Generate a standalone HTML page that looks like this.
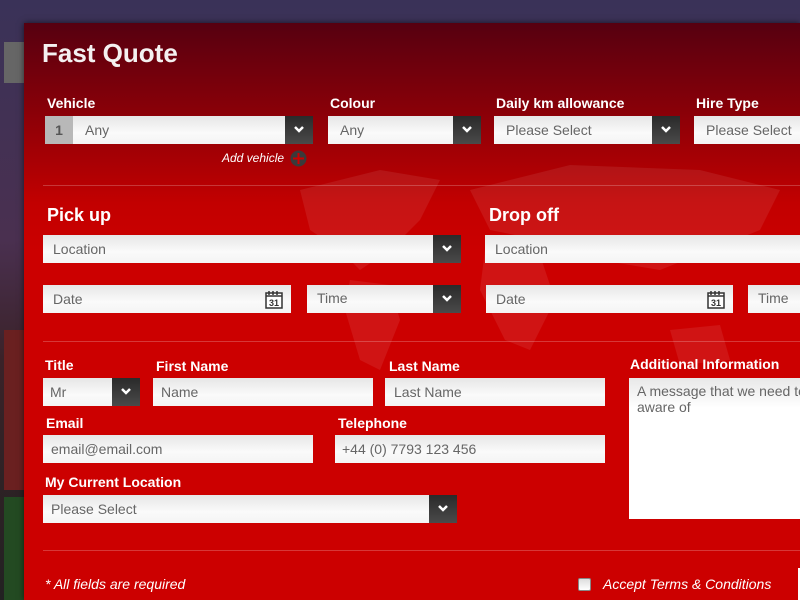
<!DOCTYPE html>
<html><head><meta charset="utf-8"><style>
*{margin:0;padding:0;box-sizing:border-box}
html,body{width:800px;height:600px;overflow:hidden}
body{position:relative;font-family:"Liberation Sans",sans-serif;background:linear-gradient(#3a3258,#4a3050 40%,#3a2228 60%,#222 100%)}
.a{position:absolute}
#panel{left:24px;top:23px;width:776px;height:577px;background:linear-gradient(#560010 0px,#8a0008 90px,#c20000 180px,#cc0000 230px,#cc0000);box-shadow:0 0 6px rgba(0,0,0,.6)}
.l{position:absolute;color:#fff;font-weight:bold;font-size:14px}
.h{position:absolute;color:#fff;font-weight:bold;font-size:18px}
.i{position:absolute;height:28px;background:linear-gradient(#e6e6e6,#fafafa 60%,#f4f4f4);color:#666;font-size:14px;line-height:28px;padding-left:10px;overflow:hidden;white-space:nowrap}
.b{position:absolute;right:0;top:0;width:28px;height:28px;background:linear-gradient(#2a2a2a,#4a4a4a)}
.b svg{position:absolute;left:8px;top:9px}
.hr{position:absolute;left:43px;width:757px;height:1px;background:rgba(255,255,255,.22)}
.cal{position:absolute;right:8px;top:5px}
.it{position:absolute;color:#fff;font-style:italic;font-size:14px}
</style></head><body>
<div class="a" style="left:4px;top:42px;width:20px;height:41px;background:#666"></div>
<div class="a" style="left:4px;top:330px;width:20px;height:160px;background:#6a2020"></div>
<div class="a" style="left:4px;top:497px;width:20px;height:103px;background:#234a22"></div>
<div class="a" id="panel"></div>
<svg class="a" style="left:240px;top:160px" width="560" height="220" viewBox="0 0 560 220"><g fill="rgba(255,255,255,0.08)">
<path d="M60 30 L140 10 L200 20 L180 60 L150 90 L120 110 L100 90 L70 70 Z"/>
<path d="M110 120 L150 125 L160 160 L140 210 L120 200 L105 150 Z"/>
<path d="M230 30 L330 5 L460 10 L540 30 L520 70 L470 90 L420 110 L360 100 L300 80 L250 70 Z"/>
<path d="M245 90 L300 95 L315 140 L290 190 L265 180 L240 130 Z"/>
<path d="M430 170 L480 165 L490 200 L440 205 Z"/>
</g></svg>
<div class="a" style="left:42px;top:38px;color:#f4f0f0;font-weight:bold;font-size:26px">Fast Quote</div>

<div class="l" style="left:47px;top:95px">Vehicle</div>
<div class="i" style="left:45px;top:116px;width:268px;padding-left:40px">Any<div class="a" style="left:0;top:0;width:28px;height:28px;background:#b8b8b8;color:#555;font-weight:bold;text-align:center">1</div><div class="b"><svg width="12" height="10"><path d="M2 2l4 4 4-4" stroke="#fff" stroke-width="2.5" fill="none"/></svg></div></div>
<div class="l" style="left:330px;top:95px">Colour</div>
<div class="i" style="left:328px;top:116px;width:153px;padding-left:12px">Any<div class="b"><svg width="12" height="10"><path d="M2 2l4 4 4-4" stroke="#fff" stroke-width="2.5" fill="none"/></svg></div></div>
<div class="l" style="left:496px;top:95px">Daily km allowance</div>
<div class="i" style="left:494px;top:116px;width:186px;padding-left:12px">Please Select<div class="b"><svg width="12" height="10"><path d="M2 2l4 4 4-4" stroke="#fff" stroke-width="2.5" fill="none"/></svg></div></div>
<div class="l" style="left:696px;top:95px">Hire Type</div>
<div class="i" style="left:694px;top:116px;width:120px;padding-left:12px">Please Select</div>
<div class="it" style="left:222px;top:151px;font-size:12px">Add vehicle</div>
<svg class="a" style="left:290px;top:150px" width="17" height="17"><circle cx="8.5" cy="8.5" r="8" fill="#3a3a3a"/><path d="M8.5 3v11M3 8.5h11" stroke="#c00" stroke-width="2"/></svg>
<div class="hr" style="top:185px"></div>

<div class="h" style="left:47px;top:205px">Pick up</div>
<div class="h" style="left:489px;top:205px">Drop off</div>
<div class="i" style="left:43px;top:235px;width:418px">Location<div class="b"><svg width="12" height="10"><path d="M2 2l4 4 4-4" stroke="#fff" stroke-width="2.5" fill="none"/></svg></div></div>
<div class="i" style="left:485px;top:235px;width:330px">Location</div>
<div class="i" style="left:43px;top:285px;width:248px">Date<svg class="cal" width="18" height="19"><rect x="1" y="3" width="16" height="15" fill="#fff" stroke="#333" stroke-width="1.5"/><path d="M4 1v4M8 1v4M12 1v4M1 6h16" stroke="#333" stroke-width="1.5"/><text x="9" y="16" font-size="9" font-weight="bold" text-anchor="middle" fill="#333" font-family="Liberation Sans">31</text></svg></div>
<div class="i" style="left:307px;top:285px;width:154px;line-height:26px">Time<div class="b"><svg width="12" height="10"><path d="M2 2l4 4 4-4" stroke="#fff" stroke-width="2.5" fill="none"/></svg></div></div>
<div class="i" style="left:486px;top:285px;width:247px">Date<svg class="cal" width="18" height="19"><rect x="1" y="3" width="16" height="15" fill="#fff" stroke="#333" stroke-width="1.5"/><path d="M4 1v4M8 1v4M12 1v4M1 6h16" stroke="#333" stroke-width="1.5"/><text x="9" y="16" font-size="9" font-weight="bold" text-anchor="middle" fill="#333" font-family="Liberation Sans">31</text></svg></div>
<div class="i" style="left:748px;top:285px;width:70px;line-height:26px">Time</div>
<div class="hr" style="top:341px"></div>

<div class="l" style="left:45px;top:357px">Title</div>
<div class="i" style="left:43px;top:378px;width:97px;padding-left:7px">Mr<div class="b"><svg width="12" height="10"><path d="M2 2l4 4 4-4" stroke="#fff" stroke-width="2.5" fill="none"/></svg></div></div>
<div class="l" style="left:156px;top:358px">First Name</div>
<div class="i" style="left:153px;top:378px;width:220px;padding-left:8px">Name</div>
<div class="l" style="left:389px;top:358px">Last Name</div>
<div class="i" style="left:385px;top:378px;width:220px;padding-left:9px">Last Name</div>
<div class="l" style="left:630px;top:356px">Additional Information</div>
<div class="a" style="left:629px;top:378px;width:171px;height:141px;background:linear-gradient(#e8e8e8,#fff 30px);color:#666;font-size:14px;line-height:16px;padding:5px 8px;overflow:hidden"><div style="width:220px">A message that we need to be<br>aware of</div></div>
<div class="l" style="left:46px;top:415px">Email</div>
<div class="i" style="left:43px;top:435px;width:270px;padding-left:8px">email@email.com</div>
<div class="l" style="left:338px;top:415px">Telephone</div>
<div class="i" style="left:335px;top:435px;width:270px;padding-left:7px">+44 (0) 7793 123 456</div>
<div class="l" style="left:45px;top:474px">My Current Location</div>
<div class="i" style="left:43px;top:495px;width:414px;padding-left:8px">Please Select<div class="b"><svg width="12" height="10"><path d="M2 2l4 4 4-4" stroke="#fff" stroke-width="2.5" fill="none"/></svg></div></div>
<div class="hr" style="top:550px"></div>

<div class="it" style="left:45px;top:576px">* All fields are required</div>
<div class="a" style="left:578px;top:578px;width:13px;height:13px;border-radius:2px;background:linear-gradient(#ddd,#fff);border:1px solid #888"></div>
<div class="it" style="left:603px;top:576px">Accept Terms &amp; Conditions</div>
<div class="a" style="left:798px;top:568px;width:2px;height:32px;background:#fff"></div>
</body></html>
